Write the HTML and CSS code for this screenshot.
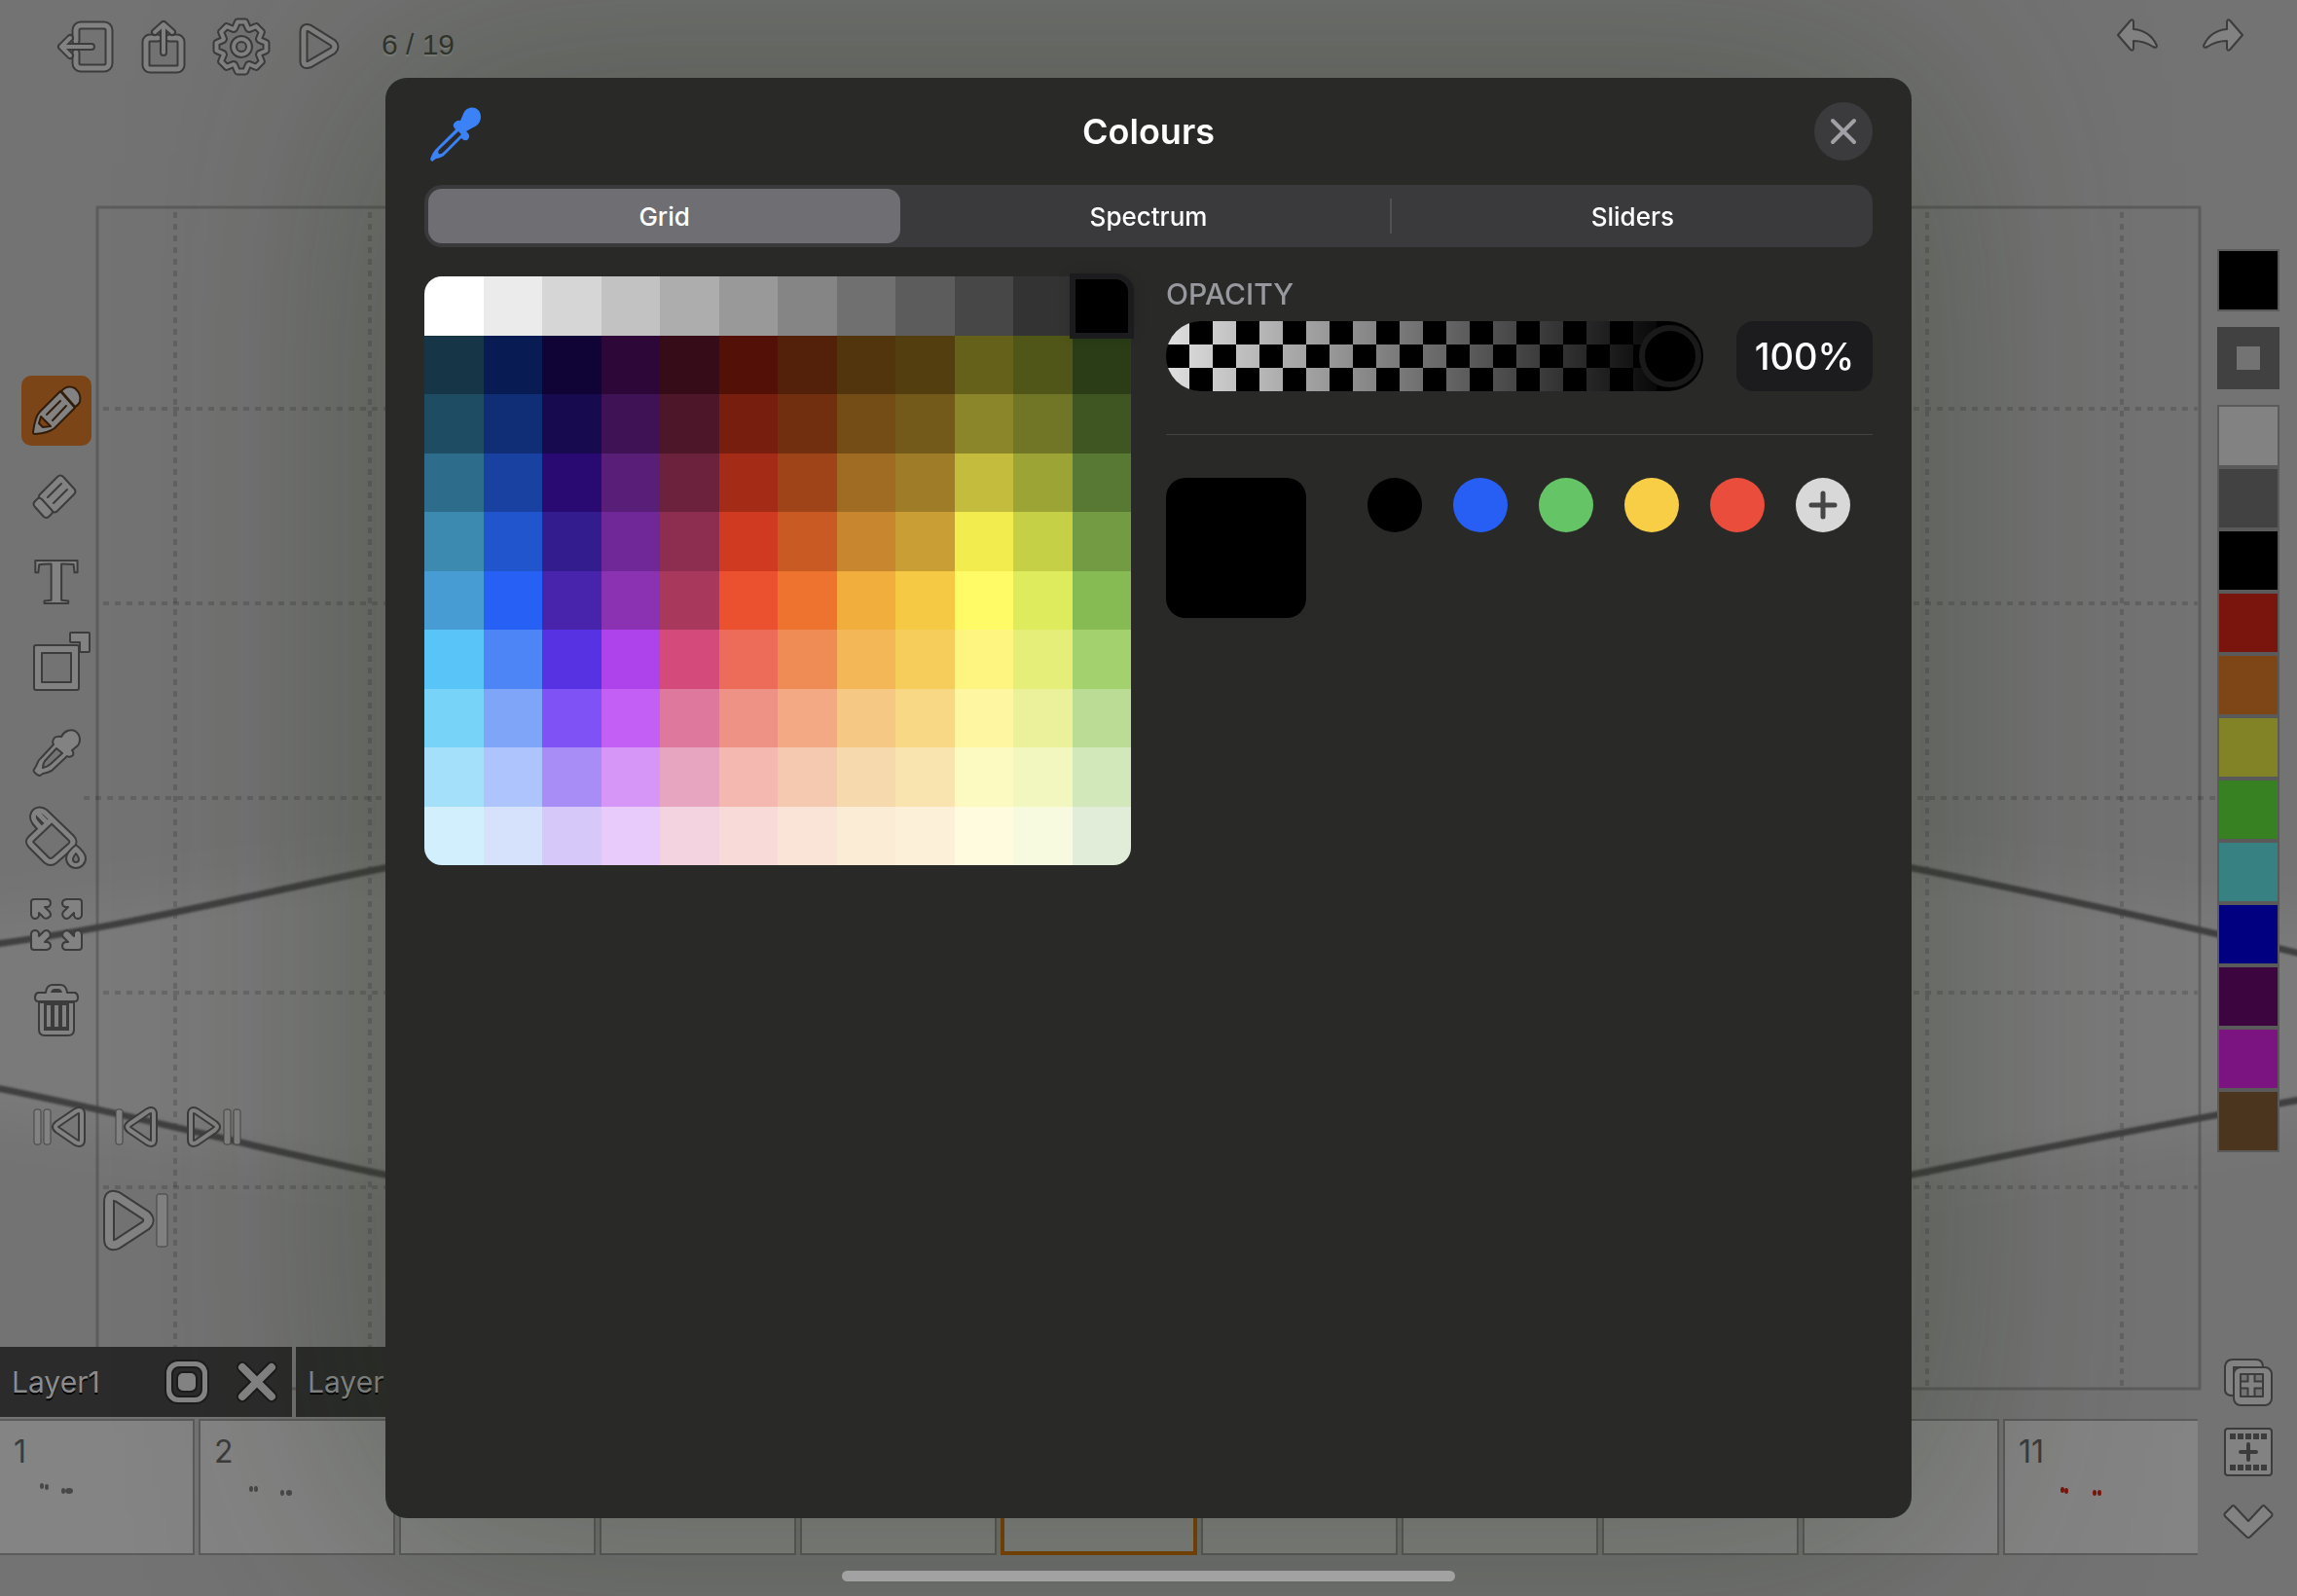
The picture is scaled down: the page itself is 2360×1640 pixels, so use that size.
FILE: index.html
```
<!DOCTYPE html>
<html lang="en">
<head>
    <meta charset="UTF-8">
    <meta name="viewport" content="width=device-width, initial-scale=1.0">
    <title>Colours</title>
    <link rel="stylesheet" href="styles.css">
</head>
<body>

    <!-- Drawing canvas -->
    <svg class="canvas" viewBox="0 0 2360 1640" preserveAspectRatio="none" aria-hidden="true">
        <defs>
            <filter id="glow" x="-20%" y="-60%" width="140%" height="220%"><feGaussianBlur stdDeviation="24"/></filter>
            <filter id="soft"><feGaussianBlur stdDeviation="1"/></filter>
        </defs>
        <path class="beam" filter="url(#glow)" d="M-80 950 L396 892 H1964 L2440 950 V1140 L1964 1207 H396 L-80 1140Z"/>
        <rect class="frame" x="100" y="213" width="2160" height="1214"/>
        <g class="guides">
            <path d="M180 218V1424M380 218V1424M1980 218V1424M2180 218V1424"/>
            <path d="M106 420H2258M106 620H2258M86 820H2276M106 1020H2258M106 1220H2258"/>
        </g>
        <g class="strokes" filter="url(#soft)">
            <path d="M-4 970C130 952 264 918 400 891M-4 1118C130 1144 264 1180 400 1208"/>
            <path d="M1960 891C2096 918 2230 948 2364 980M1960 1208C2096 1180 2230 1154 2364 1130"/>
        </g>
    </svg>

    <div class="app">
        <header class="topbar">
            <button class="top-btn" aria-label="Exit">
                <svg width="60" height="60" viewBox="0 0 60 60">
                    <path id="door" d="M20 24V13a5 5 0 0 1 5-5H49a5 5 0 0 1 5 5V47a5 5 0 0 1-5 5H25a5 5 0 0 1-5-5V36"/>
                    <use href="#door" class="edge"/><use href="#door" class="face"/>
                    <path id="out" d="M36 30H5M14 21L5 30L14 39"/>
                    <use href="#out" class="edge thin"/><use href="#out" class="face thin"/>
                </svg>
            </button>
            <button class="top-btn" aria-label="Share">
                <svg width="60" height="60" viewBox="0 0 60 60">
                    <path id="box" d="M24 21H16a4 4 0 0 0-4 4V49a4 4 0 0 0 4 4H44a4 4 0 0 0 4-4V25a4 4 0 0 0-4-4H36"/>
                    <use href="#box" class="edge"/><use href="#box" class="face"/>
                    <path id="up" d="M30 36V7M21 15L30 7L39 15"/>
                    <use href="#up" class="edge thin"/><use href="#up" class="face thin"/>
                </svg>
            </button>
            <button class="top-btn" aria-label="Settings">
                <svg width="60" height="60" viewBox="-30 -30 60 60">
                    <g id="gear">
                        <path d="M-7-18.5L-4-25.5L4-25.5L7-18.5L8.1-18L15.2-20.9L20.9-15.2L18-8.1L18.5-7L25.5-4L25.5 4L18.5 7L18 8.1L20.9 15.2L15.2 20.9L8.1 18L7 18.5L4 25.5L-4 25.5L-7 18.5L-8.1 18L-15.2 20.9L-20.9 15.2L-18 8.1L-18.5 7L-25.5 4L-25.5-4L-18.5-7L-18-8.1L-20.9-15.2L-15.2-20.9L-8.1-18Z"/>
                        <circle r="8"/>
                    </g>
                    <use href="#gear" class="edge thin"/><use href="#gear" class="face thin"/>
                </svg>
            </button>
            <button class="top-btn" aria-label="Play">
                <svg width="60" height="60" viewBox="0 0 60 60">
                    <path id="play" d="M14 15Q14 9 20 11L44 26Q48 30 44 34L20 48Q14 50 14 45Z"/>
                    <use href="#play" class="edge"/><use href="#play" class="face"/>
                </svg>
            </button>
            <span class="counter">6 / 19</span>
            <div class="history">
                <button class="top-btn" aria-label="Undo">
                    <svg width="44" height="36" viewBox="0 0 44 36"><path class="solid" d="M2 18L15 3Q18 1 18 5V12C30 13 38 20 42 29Q42 32 38 30C32 26 27 24 18 24V31Q18 35 15 33Z"/></svg>
                </button>
                <button class="top-btn" aria-label="Redo">
                    <svg width="44" height="36" viewBox="0 0 44 36"><path class="solid" d="M42 18L29 3Q26 1 26 5V12C14 13 6 20 2 29Q2 32 6 30C12 26 17 24 26 24V31Q26 35 29 33Z"/></svg>
                </button>
            </div>
        </header>

        <main class="stage">
            <div class="left">
                <div class="tools">
                    <button class="tool active" aria-label="Pencil">
                        <svg viewBox="0 0 72 72">
                            <path class="solid" d="M40 16L19 37Q14 42 12 58Q12 60 14 60Q28 59 34 54L55 33Z"/>
                            <path class="solid" d="M41 16Q47 9 55 13Q62 19 60 27Q58 31 55 32Z"/>
                            <path class="line" d="M40 26L26 40M46 31L32 46"/>
                            <path class="hole" d="M20 42L30 52L22 53L18 49Z"/>
                        </svg>
                    </button>
                    <button class="tool" aria-label="Eraser">
                        <svg viewBox="0 0 72 72">
                            <path class="solid" d="M37 16Q40 13 43 16L54 28Q57 31 54 34L37 51Q34 54 31 51L19 39Q17 36 19 34Z"/>
                            <path class="solid" d="M17 38Q19 37 21 39L31 50Q33 52 31 54L28 57Q26 59 23 57L14 47Q11 44 14 41Z"/>
                            <path class="line" d="M41 23L27 37M47 29L33 43"/>
                        </svg>
                    </button>
                    <button class="tool" aria-label="Text">
                        <svg viewBox="0 0 72 72"><text class="letter" x="36" y="58">T</text></svg>
                    </button>
                    <button class="tool" aria-label="Transform">
                        <svg viewBox="0 0 72 72">
                            <path class="solid" d="M50 1Q50 0 51 0H69Q70 0 70 1V19Q70 20 69 20H61Q60 20 60 19V10H51Q50 10 50 9Z"/>
                            <path class="solid" fill-rule="evenodd" d="M15 13H57Q59 13 59 15V57Q59 59 57 59H15Q13 59 13 57V15Q13 13 15 13ZM21 21V51H51V21Z"/>
                        </svg>
                    </button>
                    <button class="tool" aria-label="Pick colour">
                        <svg viewBox="0 0 72 72">
                            <path class="solid" fill-rule="evenodd" d="M41 19C44 13 50 11 55 13C61 17 61 24 58 28L52 33Q54 35 53 38Q50 41 47 39L31 54Q27 56 22 57L19 59Q16 59 13 55Q12 53 14 51C17 47 16 44 20 41L33 27Q31 24 34 20Q37 18 41 19ZM36 31L24 44Q22 47 22 51Q27 50 30 47L42 36Z"/>
                        </svg>
                    </button>
                    <button class="tool" aria-label="Fill">
                        <svg viewBox="0 0 72 72">
                            <path id="bucket" d="M19 24L14 18C9 11 17 3 24 9L51 35Q55 39 51 43L34 58Q30 61 26 58L10 42Q7 39 10 36L29 18M18 11L27 20"/>
                            <use href="#bucket" class="edge"/><use href="#bucket" class="face"/>
                            <path class="solid" fill-rule="evenodd" d="M56 42Q66 50 66 56A10 10 0 0 1 46 56Q46 50 56 42ZM56 51Q53 55 53 57A3 3 0 0 0 59 57Q59 55 56 51Z"/>
                        </svg>
                    </button>
                    <button class="tool" aria-label="Fit to screen">
                        <svg viewBox="0 0 72 72">
                            <path id="corner" class="solid" d="M10 26V13Q10 10 13 10H27Q30 11 30 14Q30 17 27 18H24L29 23Q31 26 29 28Q26 31 23 29L18 24V27Q17 30 14 30Q11 30 10 26Z"/>
                            <use href="#corner" transform="rotate(90 36 36)"/>
                            <use href="#corner" transform="rotate(180 36 36)"/>
                            <use href="#corner" transform="rotate(270 36 36)"/>
                        </svg>
                    </button>
                    <button class="tool" aria-label="Delete">
                        <svg viewBox="0 0 72 72">
                            <path class="solid" d="M18 28H54V56Q54 62 48 62H24Q18 62 18 56Z"/>
                            <path class="solid" d="M17 18H25Q26 10 32 10H40Q46 10 47 18H55Q58 19 58 23Q58 27 55 27H17Q14 27 14 23Q14 19 17 18Z"/>
                            <path class="ink" d="M30 18Q31 14 34 14H38Q41 14 42 18ZM23 27H49V57H23Z"/>
                            <path class="bars" d="M28 31V53M36 31V53M44 31V53"/>
                        </svg>
                    </button>
                </div>
                <div class="playback">
                    <button aria-label="First frame">
                        <svg width="60" height="48" viewBox="0 0 60 48">
                            <path id="prev" d="M54 11Q54 5 48 8L29 21Q25 24 29 27L48 40Q54 43 54 37Z"/>
                            <use href="#prev" class="edge thin"/><use href="#prev" class="face thin"/>
                            <rect class="bar" x="5" y="6" width="7" height="36" rx="2"/><rect class="bar" x="15" y="6" width="7" height="36" rx="2"/>
                        </svg>
                    </button>
                    <button aria-label="Previous frame">
                        <svg width="60" height="48" viewBox="0 0 60 48">
                            <g transform="translate(-6 0)"><use href="#prev" class="edge thin"/><use href="#prev" class="face thin"/></g>
                            <rect class="bar" x="9" y="6" width="7" height="36" rx="2"/>
                        </svg>
                    </button>
                    <button aria-label="Last frame">
                        <svg width="60" height="48" viewBox="0 0 60 48">
                            <g transform="matrix(-1 0 0 1 60 0)"><use href="#prev" class="edge thin"/><use href="#prev" class="face thin"/></g>
                            <rect class="bar" x="40" y="6" width="7" height="36" rx="2"/><rect class="bar" x="50" y="6" width="7" height="36" rx="2"/>
                        </svg>
                    </button>
                </div>
                <button class="next" aria-label="Next frame">
                    <svg width="80" height="72" viewBox="0 0 80 72">
                        <path id="next" d="M13 17Q13 8 22 12L51 31Q56 36 51 41L22 60Q13 64 13 55Z"/>
                        <use href="#next" class="edge wide"/><use href="#next" class="face wide"/>
                        <rect class="bar" x="62" y="9" width="11" height="54" rx="2"/>
                    </svg>
                </button>
            </div>

            <div class="palette">
                <button class="swatch" style="background-color:#000" aria-label="Current colour"></button>
                <button class="swatch line-width" aria-label="Line width"></button>
                <div class="swatches">
                    <button class="swatch" style="background-color:#828282" aria-label="White"></button>
                    <button class="swatch" style="background-color:#424242" aria-label="Grey"></button>
                    <button class="swatch" style="background-color:#000" aria-label="Black"></button>
                    <button class="swatch" style="background-color:#7a150d" aria-label="Red"></button>
                    <button class="swatch" style="background-color:#7e4517" aria-label="Orange"></button>
                    <button class="swatch" style="background-color:#828226" aria-label="Yellow"></button>
                    <button class="swatch" style="background-color:#388123" aria-label="Green"></button>
                    <button class="swatch" style="background-color:#388182" aria-label="Teal"></button>
                    <button class="swatch" style="background-color:#000080" aria-label="Blue"></button>
                    <button class="swatch" style="background-color:#3d053f" aria-label="Plum"></button>
                    <button class="swatch" style="background-color:#7b1380" aria-label="Magenta"></button>
                    <button class="swatch" style="background-color:#4b351f" aria-label="Brown"></button>
                </div>
            </div>
        </main>

        <footer class="bottom">
            <div class="timeline">
                <div class="layers">
                    <div class="layer">
                        <span>Layer1</span>
                        <button aria-label="Toggle layer">
                            <svg width="48" height="48" viewBox="0 0 48 48">
                                <rect class="knob" x="2" y="2" width="44" height="44" rx="13"/>
                                <rect class="knob-hole" x="9" y="9" width="30" height="30" rx="7"/>
                                <rect class="knob" x="14" y="14" width="20" height="20" rx="6"/>
                            </svg>
                        </button>
                        <button aria-label="Remove layer">
                            <svg width="48" height="48" viewBox="0 0 48 48">
                                <path class="cross-edge" d="M9 9L39 39M39 9L9 39"/>
                                <path class="cross" d="M9 9L39 39M39 9L9 39"/>
                            </svg>
                        </button>
                    </div>
                    <div class="layer second"><span>Layer2</span></div>
                </div>
                <div class="frames">
                    <div class="thumb"><span>1</span>
                        <svg viewBox="0 0 198 136"><g class="scribble"><ellipse cx="43" cy="67" rx="2" ry="3"/><ellipse cx="48" cy="68" rx="2" ry="3"/><ellipse cx="65" cy="72" rx="2" ry="3"/><ellipse cx="71" cy="72" rx="4" ry="3"/></g></svg>
                    </div>
                    <div class="thumb"><span>2</span>
                        <svg viewBox="0 0 198 136"><g class="scribble"><ellipse cx="52" cy="70" rx="2" ry="3"/><ellipse cx="57" cy="70" rx="2" ry="3"/><ellipse cx="84" cy="74" rx="2" ry="3"/><ellipse cx="91" cy="74" rx="3" ry="3"/></g></svg>
                    </div>
                    <div class="thumb"></div>
                    <div class="thumb"></div>
                    <div class="thumb"></div>
                    <div class="thumb current"></div>
                    <div class="thumb"></div>
                    <div class="thumb"></div>
                    <div class="thumb"></div>
                    <div class="thumb"></div>
                    <div class="thumb"><span>11</span>
                        <svg viewBox="0 0 198 136"><g class="scribble red"><ellipse cx="59" cy="71" rx="2" ry="3"/><ellipse cx="63" cy="72" rx="2" ry="3"/><ellipse cx="92" cy="74" rx="2" ry="3"/><ellipse cx="97" cy="74" rx="2" ry="3"/></g></svg>
                    </div>
                </div>
            </div>
            <div class="frame-actions">
                <button class="tool" aria-label="Duplicate frame">
                    <svg viewBox="0 0 72 72">
                        <path class="solid" d="M20 13H44Q51 13 51 21V50H20Q12 50 12 44V20Q13 13 20 13Z"/>
                        <path class="line" d="M21 44V21H44"/>
                        <rect class="solid" x="21" y="21" width="39" height="39" rx="7"/>
                        <rect class="hole" x="28" y="28" width="23" height="23"/>
                        <path class="edge-plus" d="M39 28V51M28 39H51"/><path class="face-plus" d="M39 29V50M29 39H50"/>
                    </svg>
                </button>
                <button class="tool" aria-label="Add frame">
                    <svg viewBox="0 0 72 72">
                        <rect class="solid" x="12" y="12" width="48" height="48" rx="3"/>
                        <path class="perf" d="M17 20H56M17 52H56"/>
                        <path class="plus" d="M36 28V44M28 36H44"/>
                    </svg>
                </button>
                <button class="tool" aria-label="Hide timeline">
                    <svg viewBox="0 0 72 72"><path class="solid" d="M12 27L19 20Q20 18 22 20L36 35L50 20Q52 18 53 20L60 27Q61 28 60 30L38 51Q36 53 34 51L12 30Q11 28 12 27Z"/></svg>
                </button>
            </div>
        </footer>
    </div>

    <!-- Colour picker -->
    <div class="overlay">
        <section class="picker" role="dialog" aria-labelledby="picker-title">
            <div class="picker-head">
                <button class="eyedropper" aria-label="Eyedropper">
                    <svg width="60" height="60" viewBox="0 0 60 60">
                        <path fill-rule="evenodd" d="M37 19L40 12C44 2 58 4 58 15C58 20 55 24 50 26L43 30Q48 34 45 38Q42 41 38 37L21 54Q18 57 12 58L8 61L6 59Q8 52 12 48L32 28Q28 24 31 21Q34 18 37 19ZM35 30L16 48Q13 51 15 53Q17 54 20 51L38 33Z"/>
                    </svg>
                </button>
                <h1 id="picker-title">Colours</h1>
                <button class="close" aria-label="Close">
                    <svg width="24" height="24" viewBox="0 0 24 24"><path d="M1 1L23 23M23 1L1 23"/></svg>
                </button>
            </div>

            <div class="segments">
                <button class="segment selected">Grid</button>
                <button class="segment">Spectrum</button>
                <button class="segment divided">Sliders</button>
            </div>

            <div class="picker-body">
                <div class="colour-grid" id="colour-grid"></div>

                <div class="side">
                    <label for="opacity">OPACITY</label>
                    <div class="opacity-row">
                        <input type="range" id="opacity" min="0" max="100" value="100">
                        <input type="text" id="opacity-value" value="100%" aria-label="Opacity value">
                    </div>
                    <div class="saved">
                        <div class="preview"></div>
                        <div class="dots">
                            <button style="background-color:#000" aria-label="Black"></button>
                            <button style="background-color:#275ff4" aria-label="Blue"></button>
                            <button style="background-color:#65c466" aria-label="Green"></button>
                            <button style="background-color:#f7ce46" aria-label="Yellow"></button>
                            <button style="background-color:#eb4d3d" aria-label="Red"></button>
                            <button class="add" aria-label="Add colour">
                                <svg width="28" height="28" viewBox="0 0 28 28"><path d="M14 2V26M2 14H26"/></svg>
                            </button>
                        </div>
                    </div>
                </div>
            </div>
        </section>
    </div>

    <div class="home-bar"></div>

    <script src="script.js"></script>
</body>
</html>
```
FILE: styles.css
```
* {
    box-sizing: border-box;
}
body {
    margin: 0;
    background-color: #737373;
    font-family: Inter, "Liberation Sans", sans-serif;
    overflow: hidden;
}
button {
    padding: 0;
    border: none;
    background: none;
    font-family: inherit;
    cursor: pointer;
}
svg {
    display: block;
    fill: none;
    overflow: visible;
}

/* canvas */
.canvas {
    position: absolute;
    top: 0;
    left: 0;
    width: 100%;
    height: 100vh;
    overflow: hidden;
}
.beam {
    fill: #fff;
    fill-opacity: 0.05;
}
.frame {
    stroke: #000;
    stroke-opacity: 0.2;
    stroke-width: 3;
}
.guides {
    stroke: #000;
    stroke-opacity: 0.14;
    stroke-width: 4;
    stroke-dasharray: 6 6;
}
.strokes {
    stroke: #404040;
    stroke-width: 7;
}

/* icons */
.edge {
    stroke: #3c3c3c;
    stroke-width: 9;
    stroke-linecap: round;
    stroke-linejoin: round;
}
.face {
    stroke: #828282;
    stroke-width: 5;
    stroke-linecap: round;
    stroke-linejoin: round;
}
.edge.thin {
    stroke-width: 8;
}
.face.thin {
    stroke-width: 4;
}
.edge.wide {
    stroke-width: 12;
}
.face.wide {
    stroke-width: 8;
}
.solid {
    fill: #828282;
    stroke: #3c3c3c;
    stroke-width: 2;
    stroke-linejoin: round;
}
.line {
    stroke: #3c3c3c;
    stroke-width: 2;
    stroke-linecap: round;
}
.hole {
    fill: #737373;
    stroke: #3c3c3c;
    stroke-width: 2;
    stroke-linejoin: round;
}
.ink {
    fill: #3c3c3c;
}
.bars {
    stroke: #828282;
    stroke-width: 4;
}
.bar {
    fill: #828282;
    stroke: #444;
    stroke-width: 1;
}
.letter {
    font-family: "Liberation Serif", serif;
    font-size: 68px;
    font-weight: bold;
    text-anchor: middle;
    fill: #828282;
    stroke: #3c3c3c;
    stroke-width: 2;
    stroke-linejoin: round;
}
.edge-plus {
    stroke: #3c3c3c;
    stroke-width: 9;
}
.face-plus {
    stroke: #828282;
    stroke-width: 5;
}
.perf {
    stroke: #3c3c3c;
    stroke-width: 6;
    stroke-dasharray: 6 2;
}
.plus {
    stroke: #3c3c3c;
    stroke-width: 4;
    stroke-linecap: round;
}

/* layout */
.app {
    position: relative;
    display: flex;
    flex-direction: column;
    min-height: 100vh;
}
.topbar {
    display: flex;
    height: 96px;
    padding: 0 36px 0 48px;
}
.top-btn {
    display: flex;
    align-items: center;
    justify-content: center;
    width: 80px;
    height: 96px;
}
.counter {
    margin-left: 24px;
    font-family: "Liberation Sans", sans-serif;
    font-size: 30px;
    line-height: 92px;
    color: #32352f;
    text-shadow: 0 2px 1px #858881;
}
.history {
    display: flex;
    gap: 8px;
    margin-left: auto;
}
.history .top-btn {
    height: 72px;
}
.stage {
    flex: 1;
    display: flex;
    justify-content: space-between;
}
.left {
    padding: 290px 0 0 22px;
}
.tools {
    display: flex;
    flex-direction: column;
    gap: 16px;
    width: 72px;
}
.tool {
    width: 72px;
    height: 72px;
    border-radius: 10px;
}
.tool.active {
    background-color: #7b4517;
}
.active .solid,
.active .line,
.active .hole {
    stroke: #331d0a;
}
.active .hole {
    fill: #7b4517;
}
.playback {
    display: flex;
    gap: 20px;
    margin: 60px 0 36px 8px;
}
.next {
    margin-left: 77px;
}
.palette {
    display: flex;
    flex-direction: column;
    gap: 16px;
    padding: 160px 18px 0 0;
}
.swatches {
    display: flex;
    flex-direction: column;
}
.swatch {
    width: 64px;
    height: 64px;
    border: 2px solid #5a5a5a;
}
.line-width {
    border: 20px solid #414141;
    background-color: #737373;
}

/* timeline */
.bottom {
    display: flex;
    height: 256px;
}
.timeline {
    flex: 1;
    min-width: 0;
}
.layers {
    display: flex;
    gap: 4px;
    height: 72px;
}
.layer {
    display: flex;
    align-items: center;
    gap: 24px;
    width: 300px;
    padding: 0 12px;
    background-color: #2b2b2b;
    font-size: 30px;
    color: #8c8c8c;
    text-shadow: 0 2px 0 #000;
}
.layer.second {
    background-color: #2b2b2b;
}
.layer span {
    flex: 1;
}
.knob {
    fill: #858585;
    stroke: #1c1c1c;
    stroke-width: 2;
}
.knob-hole {
    fill: #2b2b2b;
    stroke: #1c1c1c;
    stroke-width: 2;
}
.cross-edge {
    stroke: #1a1a1a;
    stroke-width: 12;
    stroke-linecap: round;
}
.cross {
    stroke: #858585;
    stroke-width: 8;
    stroke-linecap: round;
}
.frames {
    display: flex;
    gap: 4px;
    margin: 2px 0 0 -2px;
    overflow: hidden;
}
.thumb {
    position: relative;
    flex: 0 0 202px;
    height: 140px;
    border: 2px solid #5b5b5b;
    background-color: #848484;
}
.thumb span {
    display: block;
    padding: 12px 14px;
    font-size: 32px;
    line-height: 40px;
    color: #3b3b3b;
}
.thumb svg {
    position: absolute;
    top: 0;
    left: 0;
    width: 198px;
    height: 136px;
}
.thumb.current {
    border: 4px solid #804300;
}
.scribble {
    fill: #484848;
}
.scribble.red {
    fill: #7a150d;
}
.frame-actions {
    display: flex;
    flex-direction: column;
    padding: 0 14px 0 16px;
}

/* picker */
.overlay {
    position: fixed;
    inset: 0;
    display: flex;
    align-items: center;
    justify-content: center;
}
.picker {
    width: 1568px;
    max-width: 100%;
    height: calc(100vh - 160px);
    padding: 24px 40px;
    border-radius: 22px;
    background-color: #292928;
    box-shadow: 0 0 260px rgba(32, 46, 22, 0.42);
    color: #fff;
}
.picker-head {
    display: flex;
    align-items: center;
    justify-content: space-between;
    height: 62px;
}
.picker-head h1 {
    margin: 0;
    font-size: 36px;
    font-weight: 600;
}
.eyedropper svg {
    fill: #3b82f7;
}
.close {
    display: flex;
    align-items: center;
    justify-content: center;
    width: 60px;
    height: 60px;
    border-radius: 50%;
    background-color: #3b3b3d;
}
.close svg {
    stroke: #a0a0a6;
    stroke-width: 4;
    stroke-linecap: round;
}
.segments {
    display: flex;
    gap: 12px;
    height: 64px;
    margin-top: 24px;
    padding: 4px;
    border-radius: 18px;
    background-color: #3a3a3c;
}
.segment {
    position: relative;
    flex: 1;
    border-radius: 14px;
    font-size: 26px;
    font-weight: 500;
    color: #fff;
}
.segment.selected {
    background-color: #6f6e73;
}
.segment.divided::before {
    content: "";
    position: absolute;
    left: -7px;
    top: 10px;
    bottom: 10px;
    width: 2px;
    background-color: #515154;
}
.picker-body {
    display: grid;
    grid-template-columns: 1fr 1fr;
    gap: 36px;
    align-items: start;
    margin-top: 30px;
}
.colour-grid {
    display: grid;
    grid-template-columns: repeat(12, 1fr);
    aspect-ratio: 12 / 10;
}
.colour-grid button:first-child {
    border-top-left-radius: 18px;
}
.colour-grid button:nth-child(109) {
    border-bottom-left-radius: 18px;
}
.colour-grid button:last-child {
    border-bottom-right-radius: 18px;
}
.colour-grid .chosen {
    z-index: 1;
    border-top-right-radius: 16px;
    outline: 6px solid #1c1c1e;
    outline-offset: -3px;
    box-shadow: 0 0 16px rgba(0, 0, 0, 0.2);
}
.side label {
    display: block;
    font-size: 30px;
    font-weight: 500;
    line-height: 36px;
    color: #98989f;
}
.opacity-row {
    display: flex;
    gap: 34px;
    padding: 10px 0 44px;
    border-bottom: 1px solid #434343;
}
#opacity {
    -webkit-appearance: none;
    appearance: none;
    flex: 1;
    height: 72px;
    margin: 0;
    padding: 0 2px;
    border-radius: 36px;
    background: conic-gradient(#000 25%, transparent 0 50%, #000 0 75%, transparent 0) 0 0 / 48px 48px,
        linear-gradient(to right, #e0e0e0, #000 95%);
}
#opacity::-webkit-slider-thumb {
    -webkit-appearance: none;
    width: 64px;
    height: 64px;
    border: 6px solid #1a1a1b;
    border-radius: 50%;
    background-color: #000;
}
#opacity-value {
    width: 140px;
    height: 72px;
    padding: 0;
    border: none;
    border-radius: 18px;
    background-color: #1c1c1e;
    font-family: inherit;
    font-size: 38px;
    font-weight: 500;
    text-align: center;
    color: #fff;
}
.saved {
    display: flex;
    align-items: flex-start;
    justify-content: space-between;
    padding: 44px 23px 0 0;
}
.preview {
    width: 144px;
    height: 144px;
    border-radius: 20px;
    background-color: #000;
}
.dots {
    display: flex;
    gap: 32px;
}
.dots button {
    display: flex;
    align-items: center;
    justify-content: center;
    width: 56px;
    height: 56px;
    border-radius: 50%;
}
.dots .add {
    background-color: #d8d8d8;
}
.add svg {
    stroke: #454545;
    stroke-width: 5;
    stroke-linecap: round;
}
.home-bar {
    position: fixed;
    bottom: 15px;
    left: 50%;
    width: 630px;
    height: 11px;
    border-radius: 6px;
    background-color: #a2a2a2;
    transform: translateX(-50%);
}
```
FILE: script.js
```
const rows = [
    "ffffff ebebeb d6d6d6 c2c2c2 adadad 999999 858585 707070 5c5c5c 474747 333333 000000",
    "163648 081b53 0f0435 2c0737 360c18 531007 532009 53350d 523e0f 65611b 4f5617 2a3d16",
    "1e4d63 0f2e76 180a4e 3f1256 4e1629 781e0e 722f10 734c16 73591a 8b8629 707625 3f5623",
    "2e6c8c 1841a1 280a72 591e77 6c213d a42b16 9f4418 a06b23 9f7d28 c3bc3c 9da436 587934",
    "3c8ab0 2155ce 331c8e 702898 8d2e50 d03a20 ca5a24 c8862e c99f35 f3ec4e c6d047 729b44",
    "479dd3 2660f5 4724ab 8b32b2 a8395c eb512e ed732e f1ae3d f5c944 fefb67 ddeb5c 86ba52",
    "59c4f7 4e85f6 5632e2 af43eb d44a7a ed6c59 ef8c56 f3b757 f6cd5b fef581 e6ee7a a3d16e",
    "78d3f8 7fa5f8 7f52f5 c45ff6 de789d ee9286 f2a984 f5c983 f8d885 fef6a1 ebf19b badc94",
    "a5e0fa adc4fc a98df6 d696f8 e8a5bf f4b8b1 f5c8b0 f7d9ae f9e4af fdfac1 f2f6bf d2e7ba",
    "d2effd d6e1fc d6c9fa e9cbfb f2d3df f8dbd9 fae4d7 fbecd6 fcf1d8 fefbdf f7fade e1edd8"
];

const grid = document.getElementById("colour-grid");

rows.join(" ").split(" ").forEach((hex) => {
    const cell = document.createElement("button");
    cell.style.backgroundColor = "#" + hex;
    cell.setAttribute("aria-label", "#" + hex);
    if (hex === "000000") {
        cell.className = "chosen";
    }
    grid.appendChild(cell);
});

// Keep the number box in step with the slider
const slider = document.getElementById("opacity");
slider.addEventListener("input", () => {
    document.getElementById("opacity-value").value = slider.value + "%";
});
```
